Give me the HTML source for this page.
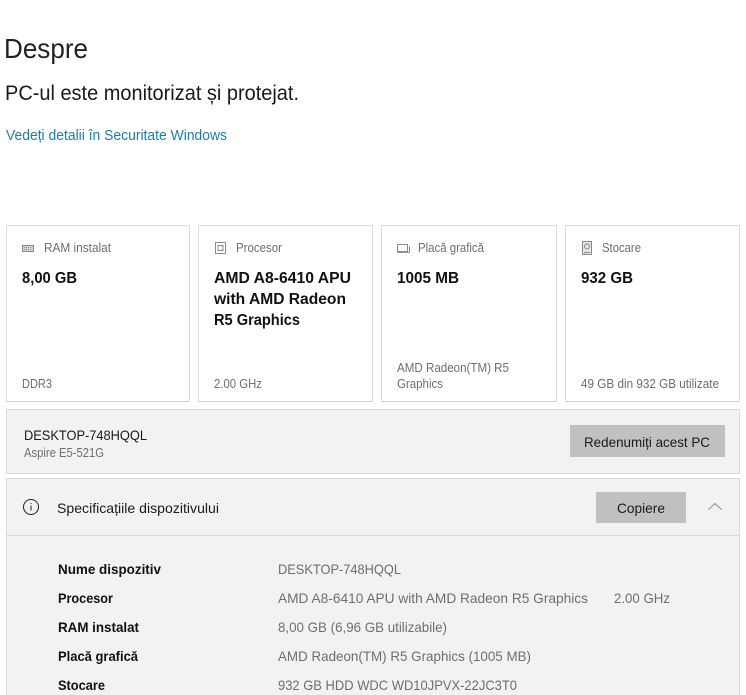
<!DOCTYPE html>
<html lang="ro">
<head>
<meta charset="utf-8">
<title>Despre</title>
<style>
html,body{margin:0;padding:0;background:#fff;width:746px;height:695px;overflow:hidden}
svg{position:absolute;left:0;top:0;display:block}
text{font-family:"Liberation Sans",sans-serif}
.h{fill:#222;font-size:28px}
.t{fill:#1a1a1a;font-size:21px}
.l{fill:#1a7db8;font-size:14.5px}
.c{fill:#6e6e6e;font-size:12.5px}
.b{fill:#111;font-size:16px;font-weight:bold}
.n{fill:#1a1a1a;font-size:14px}
.s{fill:#6e6e6e;font-size:12.5px}
.k{fill:#111;font-size:14px;font-weight:bold}
.v{fill:#6e6e6e;font-size:14px}
</style>
</head>
<body>
<svg width="746" height="695" viewBox="0 0 746 695" xmlns="http://www.w3.org/2000/svg">
<rect width="746" height="695" fill="#fff"/>

<text class="h" x="4" y="58" textLength="84" lengthAdjust="spacingAndGlyphs">Despre</text>
<text class="t" x="5" y="100" textLength="294" lengthAdjust="spacingAndGlyphs">PC-ul este monitorizat și protejat.</text>
<text class="l" x="6" y="140" textLength="221" lengthAdjust="spacingAndGlyphs">Vedeți detalii în Securitate Windows</text>

<g fill="#fff" stroke="#dcdcdc" stroke-width="1">
<rect x="6.5" y="225.5" width="183" height="176"/>
<rect x="198.5" y="225.5" width="174" height="176"/>
<rect x="381.5" y="225.5" width="175" height="176"/>
<rect x="565.5" y="225.5" width="174" height="176"/>
</g>
<path d="M7 401.5h182M199 401.5h173M382 401.5h174M566 401.5h173" stroke="#cfcfcf" stroke-width="1" fill="none"/>

<!-- RAM icon -->
<g fill="none" stroke="#8a8a8a" stroke-width="1">
<rect x="22.5" y="245.5" width="11" height="6" fill="#d8d8d8"/>
<path d="M24 247.5h8M24 249.5h8" stroke-dasharray="1 1"/>
</g>
<text class="c" x="44" y="252" textLength="67" lengthAdjust="spacingAndGlyphs">RAM instalat</text>
<text class="b" x="22" y="283" textLength="55" lengthAdjust="spacingAndGlyphs">8,00 GB</text>
<text class="c" x="22" y="388" textLength="30" lengthAdjust="spacingAndGlyphs">DDR3</text>

<!-- CPU icon -->
<g fill="none" stroke="#8a8a8a" stroke-width="1">
<rect x="215.5" y="242.5" width="10" height="11"/>
<rect x="218" y="245.5" width="5" height="5"/>
</g>
<text class="c" x="236" y="252" textLength="46" lengthAdjust="spacingAndGlyphs">Procesor</text>
<text class="b" x="214" y="283" textLength="137" lengthAdjust="spacingAndGlyphs">AMD A8-6410 APU</text>
<text class="b" x="214" y="304" textLength="132" lengthAdjust="spacingAndGlyphs">with AMD Radeon</text>
<text class="b" x="214" y="325" textLength="86" lengthAdjust="spacingAndGlyphs">R5 Graphics</text>
<text class="c" x="214" y="388" textLength="48" lengthAdjust="spacingAndGlyphs">2.00 GHz</text>

<!-- GPU icon -->
<g fill="none" stroke="#8a8a8a" stroke-width="1">
<rect x="397.5" y="244.5" width="10" height="7"/>
<path d="M397 252.5h12" stroke="#999"/>
<path d="M409.5 246.5v6"/>
</g>
<text class="c" x="418" y="252" textLength="66" lengthAdjust="spacingAndGlyphs">Placă grafică</text>
<text class="b" x="397" y="283" textLength="62" lengthAdjust="spacingAndGlyphs">1005 MB</text>
<text class="c" x="397" y="372" textLength="112" lengthAdjust="spacingAndGlyphs">AMD Radeon(TM) R5</text>
<text class="c" x="397" y="388" textLength="46" lengthAdjust="spacingAndGlyphs">Graphics</text>

<!-- Disk icon -->
<g fill="none" stroke="#8a8a8a" stroke-width="1">
<rect x="582.5" y="241.5" width="9" height="13" fill="#e4e4e4"/>
<circle cx="587" cy="246.5" r="2.5"/>
<path d="M584 252.5h6"/>
</g>
<text class="c" x="602" y="252" textLength="39" lengthAdjust="spacingAndGlyphs">Stocare</text>
<text class="b" x="581" y="283" textLength="52" lengthAdjust="spacingAndGlyphs">932 GB</text>
<text class="c" x="581" y="388" textLength="138" lengthAdjust="spacingAndGlyphs">49 GB din 932 GB utilizate</text>

<!-- Device bar -->
<rect x="6.5" y="409.5" width="733" height="64" fill="#f2f2f2" stroke="#dcdcdc"/>
<text class="n" x="24" y="440" textLength="123" lengthAdjust="spacingAndGlyphs">DESKTOP-748HQQL</text>
<text class="s" x="24" y="457" textLength="80" lengthAdjust="spacingAndGlyphs">Aspire E5-521G</text>
<rect x="570" y="425" width="155" height="32" fill="#c0c0c0"/>
<text class="n" x="584" y="447" textLength="126" lengthAdjust="spacingAndGlyphs">Redenumiți acest PC</text>

<!-- Specs panel -->
<rect x="6.5" y="478.5" width="733" height="230" fill="#f2f2f2" stroke="#dcdcdc"/>
<path d="M7 535.5h732" stroke="#dcdcdc" stroke-width="1"/>
<circle cx="31" cy="507" r="7.5" fill="none" stroke="#222" stroke-width="1"/>
<path d="M31 505.5v5" stroke="#222" stroke-width="1" fill="none"/>
<rect x="30.5" y="503" width="1" height="1" fill="#222"/>
<text class="n" x="57" y="513" textLength="162" lengthAdjust="spacingAndGlyphs">Specificațiile dispozitivului</text>
<rect x="596" y="492" width="90" height="31" fill="#c0c0c0"/>
<text class="n" x="617" y="513" textLength="48" lengthAdjust="spacingAndGlyphs">Copiere</text>
<path d="M708.5 509.5l6.5-6 6.5 6" fill="none" stroke="#888" stroke-width="1"/>

<text class="k" x="58" y="574" textLength="103" lengthAdjust="spacingAndGlyphs">Nume dispozitiv</text>
<text class="v" x="278" y="574" textLength="123" lengthAdjust="spacingAndGlyphs">DESKTOP-748HQQL</text>
<text class="k" x="58" y="603" textLength="55" lengthAdjust="spacingAndGlyphs">Procesor</text>
<text class="v" x="278" y="603" textLength="310" lengthAdjust="spacingAndGlyphs">AMD A8-6410 APU with AMD Radeon R5 Graphics</text>
<text class="v" x="614" y="603" textLength="56" lengthAdjust="spacingAndGlyphs">2.00 GHz</text>
<text class="k" x="58" y="632" textLength="81" lengthAdjust="spacingAndGlyphs">RAM instalat</text>
<text class="v" x="278" y="632" textLength="169" lengthAdjust="spacingAndGlyphs">8,00 GB (6,96 GB utilizabile)</text>
<text class="k" x="58" y="661" textLength="80" lengthAdjust="spacingAndGlyphs">Placă grafică</text>
<text class="v" x="278" y="661" textLength="253" lengthAdjust="spacingAndGlyphs">AMD Radeon(TM) R5 Graphics (1005 MB)</text>
<text class="k" x="58" y="690" textLength="47" lengthAdjust="spacingAndGlyphs">Stocare</text>
<text class="v" x="278" y="690" textLength="239" lengthAdjust="spacingAndGlyphs">932 GB HDD WDC WD10JPVX-22JC3T0</text>
</svg>
</body>
</html>
